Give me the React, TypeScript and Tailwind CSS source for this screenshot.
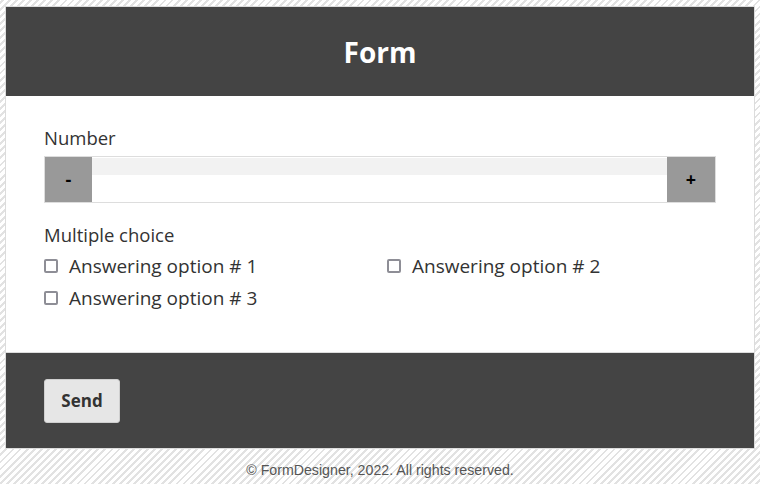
import React from "react";

export default function App() {
  const font = "font-['Trebuchet_MS','Open_Sans','DejaVu_Sans',sans-serif]";
  return (
    <div className="min-h-[484px] w-[760px] bg-[repeating-linear-gradient(-45deg,#ffffff_0px,#ffffff_3px,#e2e2e2_3px,#e2e2e2_5px)] px-[5px] pt-[6px]">
      <div className={`border border-[#dcdcdc] ${font}`}>
        <div className="h-[89px] bg-[#444444] flex items-center justify-center">
          <h1 className="text-white text-[28px] font-bold leading-none">Form</h1>
        </div>
        <div className="bg-white px-[38px] pt-[31px] pb-[43px] text-[#333333] border-b border-[#dddddd]">
          <div className="text-[18.5px] leading-[22px]">Number</div>
          <div className="mt-[7px] flex h-[47px] border border-[#dddddd]">
            <button className="w-[47px] bg-[#999999] text-black text-[18px] font-bold">-</button>
            <div className="flex-1 flex flex-col">
              <div className="h-[17px] bg-[#f2f2f2] mt-[1px]" />
              <div className="flex-1 bg-white" />
            </div>
            <button className="w-[48px] bg-[#999999] text-black text-[18px] font-bold">+</button>
          </div>
          <div className="mt-[21px] text-[18.5px] leading-[22px]">Multiple choice</div>
          <div className="mt-[9px] grid grid-cols-[343px_1fr] gap-y-[10px] text-[19px] leading-[22px]">
            {["Answering option # 1", "Answering option # 2", "Answering option # 3"].map((t) => (
              <label key={t} className="flex items-center gap-[11px]">
                <span className="inline-block w-[14px] h-[14px] border-2 border-[#8e8e96] rounded-[2px] bg-white" />
                <span>{t}</span>
              </label>
            ))}
          </div>
        </div>
        <div className="bg-[#444444] h-[95px] px-[38px] flex items-center">
          <button className="w-[76px] h-[44px] rounded-[3px] bg-[#e6e6e6] border border-[#cfcfcf] text-[#333333] text-[17px] font-bold">
            Send
          </button>
        </div>
      </div>
      <div className="h-[44px] flex items-center justify-center font-['Liberation_Sans',Arial,sans-serif] text-[14.2px] text-[#555555]">
        © FormDesigner, 2022. All rights reserved.
      </div>
    </div>
  );
}
